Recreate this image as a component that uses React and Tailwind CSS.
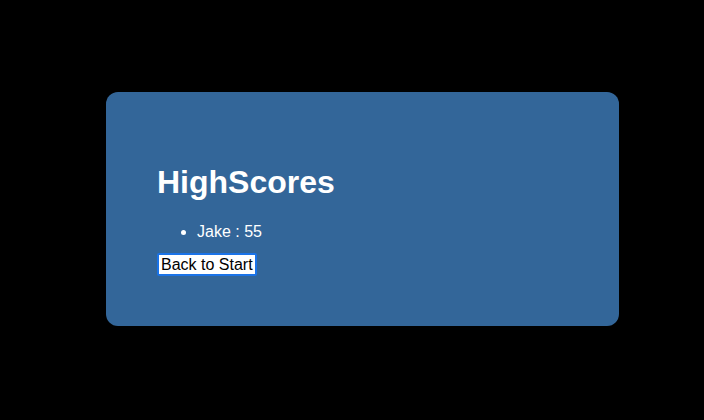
import React from "react";

const scores = [{ name: "Jake", score: 55 }];

const App = () => {
  return (
    <div className="w-[704px] h-[420px] bg-black pt-[92px] pl-[106px] font-['Liberation_Sans',Arial,sans-serif]">
      <div className="w-[513px] h-[234px] bg-[#336699] rounded-[12px] pl-[51px] pr-[52px] pt-[52px] text-white">
        <h1 className="mt-[20px] text-[32px] leading-[37px] font-bold">HighScores</h1>
        <ul className="mt-[22px] list-disc pl-[40px] text-[16px] leading-[18px]">
          {scores.map((s, i) => (
            <li key={`score_${i}`}>
              {s.name} : {s.score}
            </li>
          ))}
        </ul>
        <button className="mt-[12px] h-[23px] px-[2px] bg-white text-black text-[16px] leading-[18px] border-2 border-[#1a73e8] rounded-[2px]">
          Back to Start
        </button>
      </div>
    </div>
  );
};

export default App;
